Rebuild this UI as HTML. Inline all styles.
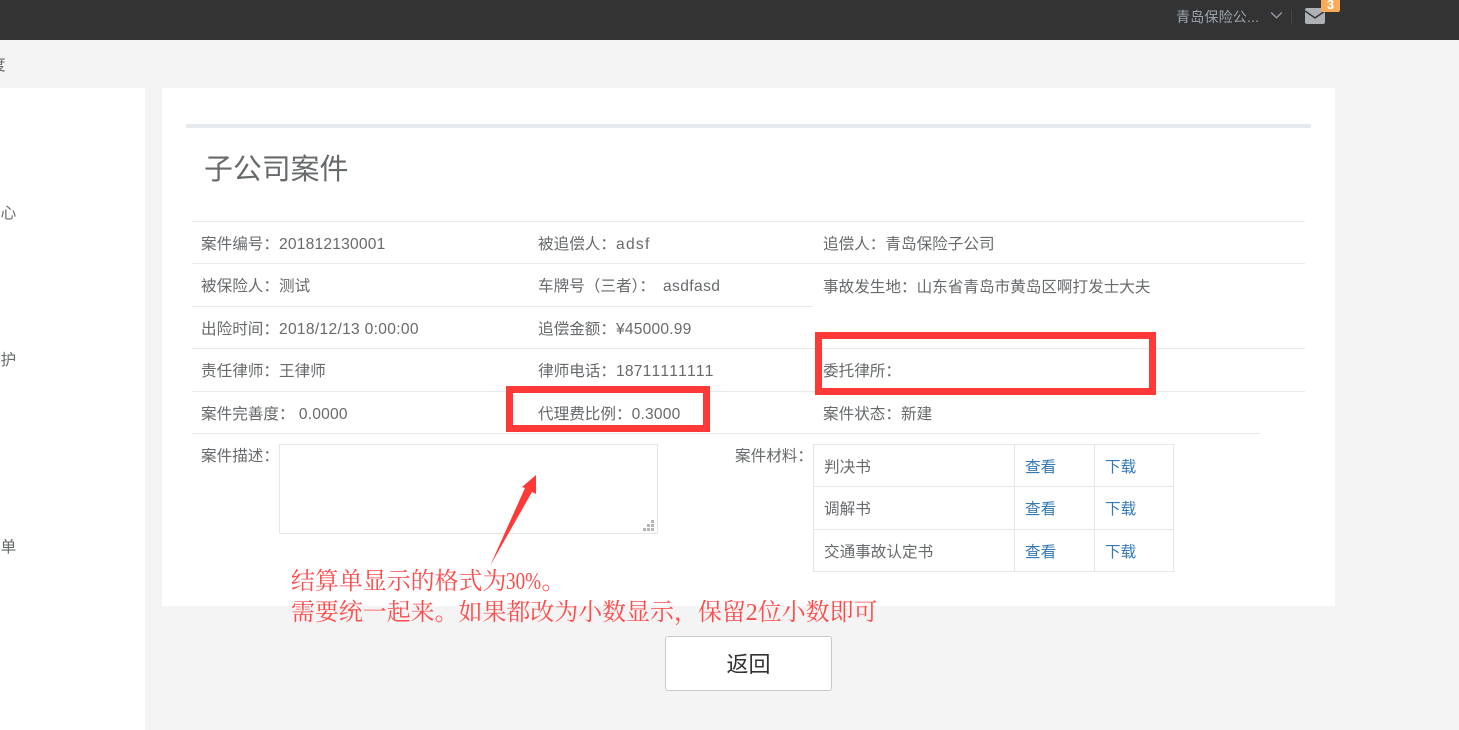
<!DOCTYPE html>
<html lang="zh">
<head>
<meta charset="utf-8">
<title>子公司案件</title>
<style>
html,body{margin:0;padding:0;background:#f4f4f4;}
body{width:1459px;height:730px;position:relative;overflow:hidden;font-family:"Liberation Sans","Noto Sans CJK SC",sans-serif;color:#676a6c;font-size:15.6px;font-kerning:none;}
.a{position:absolute;white-space:nowrap;}
.t{position:absolute;white-space:nowrap;line-height:22px;height:22px;}
.l{position:absolute;height:1px;background:#e7eaec;}
.b{position:absolute;background:#e7e7e7;}
.r{position:absolute;box-sizing:border-box;border:7px solid #ff3838;}
.lnk{color:#337ab7;}
.w{letter-spacing:.4px;}
.n{letter-spacing:.2px;}
.s{font-family:"Liberation Serif","Noto Serif CJK SC",serif;font-size:23.95px;line-height:31px;color:#ff4a4a;}
.p{display:inline-block;width:35px;transform:scaleX(.8);transform-origin:0 50%;}
</style>
</head>
<body>
<div class="a" style="left:0;top:0;width:1459px;height:40px;background:#333;"></div>
<div class="t" style="left:1176px;top:6px;font-size:14px;color:#9aa4ad;letter-spacing:.2px;">青岛保险公...</div>
<svg class="a" style="left:1270px;top:11px;" width="13" height="9" viewBox="0 0 13 9"><path d="M1.2 1.5L6.5 6.8L11.8 1.5" fill="none" stroke="#8f9ba6" stroke-width="1.4"/></svg>
<div class="a" style="left:1291px;top:10px;width:1px;height:15px;background:#444;"></div>
<svg class="a" style="left:1305px;top:8px;" width="20" height="16" viewBox="0 0 20 16"><rect x="0" y="0" width="20" height="16" rx="2" fill="#aeb1b4"/><path d="M0 3L10 10L20 3" fill="none" stroke="#333" stroke-width="1.5"/></svg>
<div class="a" style="left:1321px;top:0;width:19px;height:12px;background:#f8ac59;border-radius:0 0 2px 2px;color:#fff;font-weight:bold;font-size:13px;line-height:9px;text-align:center;">3</div>

<div class="t" style="left:-10px;top:55px;">度</div>

<div class="a" style="left:0;top:88px;width:145px;height:642px;background:#fff;"></div>
<div class="t" style="left:-15px;top:203px;">中心</div>
<div class="t" style="left:-15px;top:350px;">维护</div>
<div class="t" style="left:-15px;top:537px;">清单</div>

<div class="a" style="left:162px;top:88px;width:1173px;height:518px;background:#fff;"></div>
<div class="a" style="left:186px;top:124px;width:1125px;height:4px;background:#e7eaec;"></div>
<div class="a" style="left:204px;top:149px;font-size:28.9px;line-height:42px;color:#676a6c;">子公司案件</div>

<div class="l" style="left:192px;top:221px;width:1113px;"></div>
<div class="l" style="left:192px;top:263px;width:1113px;"></div>
<div class="l" style="left:192px;top:306px;width:621px;"></div>
<div class="l" style="left:192px;top:348px;width:1113px;"></div>
<div class="l" style="left:192px;top:391px;width:1113px;"></div>
<div class="l" style="left:192px;top:433px;width:1068px;"></div>

<div class="t" style="left:201px;top:234px;">案件编号：<span class="n">201812130001</span></div>
<div class="t" style="left:538px;top:234px;">被追偿人：<span style="letter-spacing:1.3px">adsf</span></div>
<div class="t" style="left:823px;top:234px;">追偿人：青岛保险子公司</div>

<div class="t" style="left:201px;top:276px;">被保险人：测试</div>
<div class="t" style="left:538px;top:276px;">车牌号（三者）：<span class="w" style="margin-left:8px">asdfasd</span></div>
<div class="t" style="left:823px;top:277px;">事故发生地：山东省青岛市黄岛区啊打发士大夫</div>

<div class="t" style="left:201px;top:319px;">出险时间：<span style="letter-spacing:.3px">2018/12/13 0:00:00</span></div>
<div class="t" style="left:538px;top:319px;">追偿金额：<span class="n">¥45000.99</span></div>

<div class="t" style="left:201px;top:361px;">责任律师：王律师</div>
<div class="t" style="left:538px;top:361px;">律师电话：<span class="n">18711111111</span></div>
<div class="t" style="left:823px;top:361px;">委托律所：</div>

<div class="t" style="left:201px;top:404px;">案件完善度：&nbsp;<span class="n">0.0000</span></div>
<div class="t" style="left:538px;top:404px;">代理费比例：<span class="n">0.3000</span></div>
<div class="t" style="left:823px;top:404px;">案件状态：新建</div>

<div class="t" style="left:201px;top:446px;">案件描述：</div>
<div class="a" style="left:279px;top:444px;width:379px;height:90px;box-sizing:border-box;border:1px solid #e5e6e7;background:#fff;"></div>
<svg class="a" style="left:643px;top:520px;" width="11" height="11" viewBox="0 0 11 11" fill="#b5b5b5"><rect x="8" y="0" width="3" height="3"/><rect x="4" y="4" width="3" height="3"/><rect x="8" y="4" width="3" height="3"/><rect x="0" y="8" width="3" height="3"/><rect x="4" y="8" width="3" height="3"/><rect x="8" y="8" width="3" height="3"/></svg>

<div class="t" style="left:735px;top:446px;">案件材料：</div>
<div class="b" style="left:813px;top:444px;width:361px;height:1px;"></div>
<div class="b" style="left:813px;top:486px;width:361px;height:1px;"></div>
<div class="b" style="left:813px;top:529px;width:361px;height:1px;"></div>
<div class="b" style="left:813px;top:571px;width:361px;height:1px;"></div>
<div class="b" style="left:813px;top:444px;width:1px;height:128px;"></div>
<div class="b" style="left:1014px;top:444px;width:1px;height:128px;"></div>
<div class="b" style="left:1094px;top:444px;width:1px;height:128px;"></div>
<div class="b" style="left:1173px;top:444px;width:1px;height:128px;"></div>
<div class="t" style="left:824px;top:457px;">判决书</div>
<div class="t lnk" style="left:1025px;top:457px;">查看</div>
<div class="t lnk" style="left:1105px;top:457px;">下载</div>
<div class="t" style="left:824px;top:499px;">调解书</div>
<div class="t lnk" style="left:1025px;top:499px;">查看</div>
<div class="t lnk" style="left:1105px;top:499px;">下载</div>
<div class="t" style="left:824px;top:542px;">交通事故认定书</div>
<div class="t lnk" style="left:1025px;top:542px;">查看</div>
<div class="t lnk" style="left:1105px;top:542px;">下载</div>

<div class="a" style="left:665px;top:636px;width:167px;height:55px;box-sizing:border-box;border:1px solid #c9c9c9;border-radius:3px;background:#fff;color:#333;font-size:22px;line-height:56px;text-align:center;">返回</div>

<div class="r" style="left:506px;top:386px;width:204px;height:46px;"></div>
<div class="r" style="left:815px;top:332px;width:341px;height:63px;"></div>
<svg class="a" style="left:485px;top:470px;" width="60" height="100" viewBox="0 0 60 100"><path d="M5 96L40 18L37 17L51 5L51 24L47 22Z" fill="#ff3838"/></svg>

<div class="a s" style="left:291px;top:567px;">结算单显示的格式为<span class="p">30%</span>。</div>
<div class="a s" style="left:291px;top:598px;">需要统一起来。如果都改为小数显示，保留2位小数即可</div>
</body>
</html>
